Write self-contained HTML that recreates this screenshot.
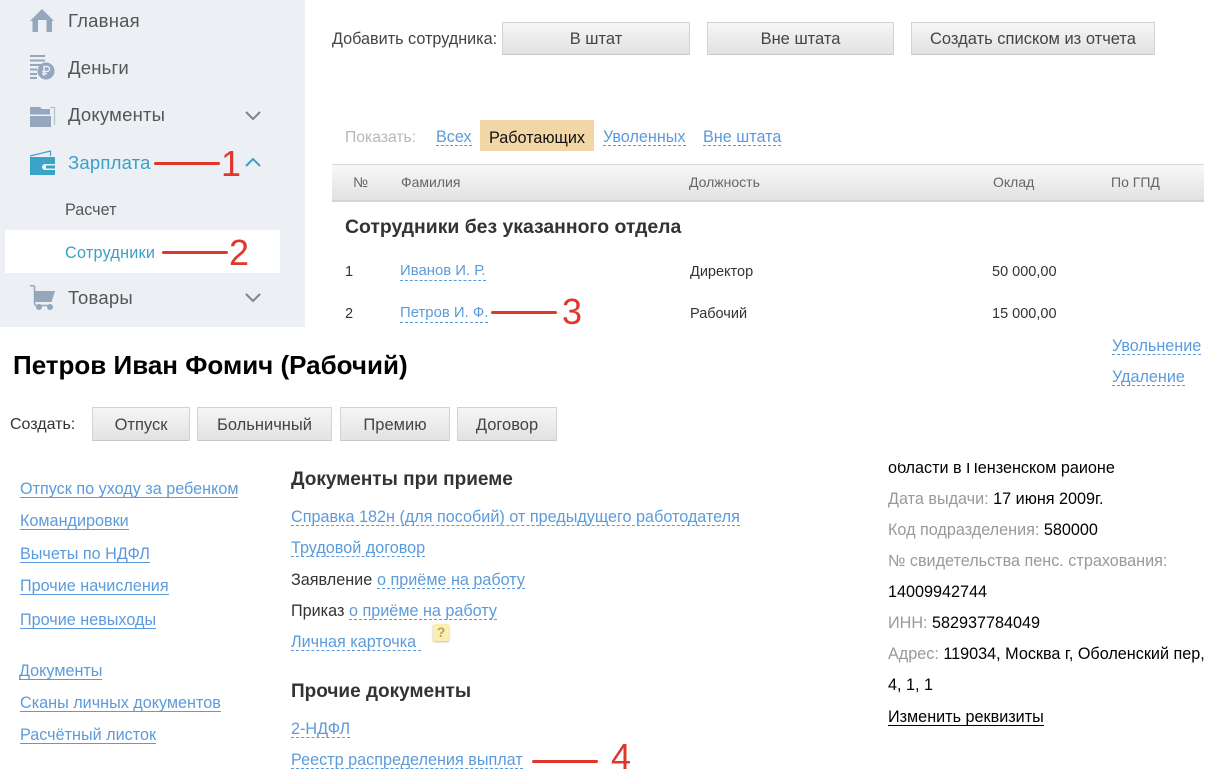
<!DOCTYPE html>
<html lang="ru"><head><meta charset="utf-8"><title>Сотрудники</title>
<style>
html,body{margin:0;padding:0;background:#fff}
body{position:relative;width:1205px;height:783px;overflow:hidden;font-family:"Liberation Sans",Arial,sans-serif;color:#333}
.t{position:absolute;white-space:nowrap;line-height:20px;height:20px}
.m{font-size:18.500px;color:#555;letter-spacing:.2px}
.s{font-size:16.200px;color:#555}
.a{color:#5c9bdb;border-bottom:1px dashed #5c9bdb;line-height:16px;height:16px;font-size:16.200px}
.u{color:#5c9bdb;border-bottom:1px solid #5c9bdb;line-height:16px;height:16px;font-size:16.200px}
.btn{position:absolute;box-sizing:border-box;border:1px solid #d2d2d2;border-bottom-color:#c8c8c8;background:linear-gradient(#f6f6f6,#e2e2e2);text-align:center;color:#444;font-size:16.500px;white-space:nowrap;border-radius:1px}
.h{font-size:14px;color:#666}
.b{color:#000}
.g{color:#999}
.l{font-size:16.200px}
.c{font-size:14.500px}
.r{position:absolute;height:3px;background:#e0372c;border-radius:2px}
.d{position:absolute;color:#e0372c;font-size:36px;line-height:36px;height:36px}
.i{position:absolute}
</style></head><body>
<div class="i" style="left:0;top:0;width:305px;height:327px;background:#eceff3"></div>
<div class="i" style="left:5px;top:230px;width:275px;height:43px;background:#fff"></div>

<svg class="i" style="left:30px;top:9px" width="25" height="24" viewBox="0 0 25 24"><path d="M12 0L24 12H22V23H16.500V11H8V23H2.500V12H0z" fill="#94a7bc"/></svg>
<svg class="i" style="left:30px;top:55px" width="26" height="25" viewBox="0 0 26 25"><path d="M0 0h15v2H0zM0 4.500h15v2H0zM0 9h11v2H0zM0 13.500h7v2H0zM0 18h7v2H0zM0 22h7v2H0z" fill="#94a7bc"/><circle cx="16" cy="16" r="8.500" fill="#94a7bc"/><path d="M14 21V11.500h3a2.500 2.500 0 010 5h-5M12 18.700h5" fill="none" stroke="#eceff3" stroke-width="1.400"/></svg>
<svg class="i" style="left:30px;top:104px" width="26" height="24" viewBox="0 0 26 24"><path d="M0 10.500V3h10l2 2h8v5.500z" fill="#94a7bc"/><path d="M0 12h21v11H0z" fill="#94a7bc"/><path d="M20 3.500h4.500V21" fill="none" stroke="#b4c2d0" stroke-width="1.200"/></svg>
<svg class="i" style="left:30px;top:150px" width="26" height="26" viewBox="0 0 26 26"><path d="M0 6L20.500 1V6" fill="none" stroke="#3aa4c8" stroke-width="1.200"/><path d="M0 7h25v7H15a3 3 0 000 6H25v5H0z" fill="#3aa4c8"/><path d="M16 15.500h9v3h-9z" fill="#3aa4c8"/></svg>
<svg class="i" style="left:30px;top:285px" width="26" height="26" viewBox="0 0 26 26"><path d="M0 .8h4L4.500 2v15.500c0 2 1 3 2.500 3H22" fill="none" stroke="#94a7bc" stroke-width="1.500"/><path d="M5 6h20l-3.500 11H5z" fill="#94a7bc"/><circle cx="9" cy="22" r="3" fill="#94a7bc"/><circle cx="20" cy="22" r="3" fill="#94a7bc"/></svg>

<div class="t m" style="left:68px;top:11px">Главная</div>
<div class="t m" style="left:68px;top:58px">Деньги</div>
<div class="t m" style="left:68px;top:105px">Документы</div>
<div class="t m" style="left:68px;top:153px;color:#3aa0c8">Зарплата</div>
<div class="t s" style="left:65px;top:200px">Расчет</div>
<div class="t s" style="left:65px;top:243px;color:#3aa0c8;letter-spacing:.25px">Сотрудники</div>
<div class="t m" style="left:68px;top:288px">Товары</div>

<svg class="i" style="left:244px;top:110px" width="18" height="12" fill="none" stroke="#7f8388" stroke-width="2"><path d="M2 2l7 7 7-7"/></svg>
<svg class="i" style="left:244px;top:156px" width="18" height="12" fill="none" stroke="#3aa0c8" stroke-width="2"><path d="M2 10l7-7 7 7"/></svg>
<svg class="i" style="left:244px;top:292px" width="18" height="12" fill="none" stroke="#7f8388" stroke-width="2"><path d="M2 2l7 7 7-7"/></svg>

<div class="t l" style="left:332px;top:29px;color:#444">Добавить сотрудника:</div>
<div class="btn" style="left:502px;top:22px;width:188px;height:33px;line-height:33px">В штат</div>
<div class="btn" style="left:707px;top:22px;width:187px;height:33px;line-height:33px">Вне штата</div>
<div class="btn" style="left:911px;top:22px;width:244px;height:33px;line-height:33px">Создать списком из отчета</div>

<div class="t" style="left:345px;top:128px;font-size:15.700px;color:#b8b8b8">Показать:</div>
<div class="t a" style="left:436px;top:128px;height:17px;line-height:18px">Всех</div>
<div class="i" style="left:480px;top:120px;width:114px;height:31px;background:#f2d6a6"></div>
<div class="t l" style="left:489px;top:128px;color:#111">Работающих</div>
<div class="t a" style="left:603px;top:128px;height:17px;line-height:18px">Уволенных</div>
<div class="t a" style="left:703px;top:128px;height:17px;line-height:18px">Вне штата</div>

<div class="i" style="left:332px;top:164px;width:872px;height:38px;box-sizing:border-box;border-top:1px solid #d8d8d8;border-bottom:2px solid #d4d4d4;background:linear-gradient(#f8f8f8,#e2e2e2)"></div>
<div class="t h" style="left:353px;top:172px">№</div>
<div class="t h" style="left:401px;top:172px">Фамилия</div>
<div class="t h" style="left:689px;top:172px">Должность</div>
<div class="t h" style="left:993px;top:172px">Оклад</div>
<div class="t h" style="left:1111px;top:172px">По ГПД</div>

<div class="t" style="left:345px;top:217px;font-size:19.400px;font-weight:bold;color:#333">Сотрудники без указанного отдела</div>

<div class="t c" style="left:345px;top:262px">1</div>
<div class="t a" style="left:400px;top:262px;font-size:14.900px;height:18px;line-height:18px">Иванов И. Р.</div>
<div class="t c" style="left:690px;top:262px">Директор</div>
<div class="t c" style="left:992px;top:262px">50 000,00</div>
<div class="t c" style="left:345px;top:304px">2</div>
<div class="t a" style="left:400px;top:304px;font-size:14.900px;height:18px;line-height:18px">Петров И. Ф.</div>
<div class="t c" style="left:690px;top:304px">Рабочий</div>
<div class="t c" style="left:992px;top:304px">15 000,00</div>

<div class="t" style="left:13px;top:351px;font-size:26px;font-weight:bold;line-height:28px;height:28px;color:#000">Петров Иван Фомич (Рабочий)</div>
<div class="t a" style="left:1112px;top:338px">Увольнение</div>
<div class="t a" style="left:1112px;top:369px">Удаление</div>

<div class="t" style="left:10px;top:415px;font-size:16px;color:#333">Создать:</div>
<div class="btn" style="left:92px;top:407px;width:98px;height:34px;line-height:34px">Отпуск</div>
<div class="btn" style="left:197px;top:407px;width:135px;height:34px;line-height:34px">Больничный</div>
<div class="btn" style="left:340px;top:407px;width:110px;height:34px;line-height:34px">Премию</div>
<div class="btn" style="left:457px;top:407px;width:100px;height:34px;line-height:34px">Договор</div>

<div class="t u" style="left:20px;top:481px">Отпуск по уходу за ребенком</div>
<div class="t u" style="left:20px;top:513px">Командировки</div>
<div class="t u" style="left:20px;top:546px">Вычеты по НДФЛ</div>
<div class="t u" style="left:20px;top:578px">Прочие начисления</div>
<div class="t u" style="left:20px;top:612px">Прочие невыходы</div>
<div class="t u" style="left:19px;top:663px">Документы</div>
<div class="t u" style="left:20px;top:695px">Сканы личных документов</div>
<div class="t u" style="left:20px;top:727px">Расчётный листок</div>

<div class="t" style="left:291px;top:470px;font-size:19px;font-weight:bold;color:#333">Документы при приеме</div>
<div class="t a" style="left:291px;top:509px">Справка 182н (для пособий) от предыдущего работодателя</div>
<div class="t a" style="left:291px;top:540px">Трудовой договор</div>
<div class="t l" style="left:291px;top:570px">Заявление</div>
<div class="t a" style="left:377px;top:572px">о приёме на работу</div>
<div class="t l" style="left:291px;top:601px">Приказ</div>
<div class="t a" style="left:349px;top:603px">о приёме на работу</div>
<div class="t a" style="left:291px;top:634px;padding-right:5px">Личная карточка</div>
<div class="i" style="left:433px;top:624px;width:16px;height:17px;background:#fbeeb0;border-radius:2px;box-shadow:0 1px 2px #bbb;text-align:center;font-size:14px;line-height:17px;font-weight:bold;color:#b9a35a">?</div>

<div class="t" style="left:291px;top:682px;font-size:19px;font-weight:bold;color:#333">Прочие документы</div>
<div class="t a" style="left:291px;top:721px">2-НДФЛ</div>
<div class="t a" style="left:291px;top:752px">Реестр распределения выплат</div>

<div class="i" style="left:888px;top:463px;width:300px;height:18px;overflow:hidden"><div class="t b l" style="left:0;top:-5px">области в Пензенском районе</div></div>
<div class="t l" style="left:888px;top:489px"><span class="g">Дата выдачи:</span> <span class="b">17 июня 2009г.</span></div>
<div class="t l" style="left:888px;top:520px"><span class="g">Код подразделения:</span> <span class="b">580000</span></div>
<div class="t g l" style="left:888px;top:551px">№ свидетельства пенс. страхования:</div>
<div class="t b l" style="left:888px;top:582px">14009942744</div>
<div class="t l" style="left:888px;top:613px"><span class="g">ИНН:</span> <span class="b">582937784049</span></div>
<div class="t l" style="left:888px;top:644px"><span class="g">Адрес:</span> <span class="b">119034, Москва г, Оболенский пер,</span></div>
<div class="t b l" style="left:888px;top:675px">4, 1, 1</div>
<div class="t b l" style="left:888px;top:708px;line-height:18px;height:17px;border-bottom:1px solid #000">Изменить реквизиты</div>

<div class="r" style="left:154px;top:162px;width:66px"></div>
<div class="d" style="left:221px;top:146px">1</div>
<div class="r" style="left:162px;top:251px;width:66px"></div>
<div class="d" style="left:229px;top:235px">2</div>
<div class="r" style="left:491px;top:311px;width:66px"></div>
<div class="d" style="left:562px;top:294px">3</div>
<div class="r" style="left:532px;top:760px;width:66px"></div>
<div class="d" style="left:611px;top:739px">4</div>
</body></html>
